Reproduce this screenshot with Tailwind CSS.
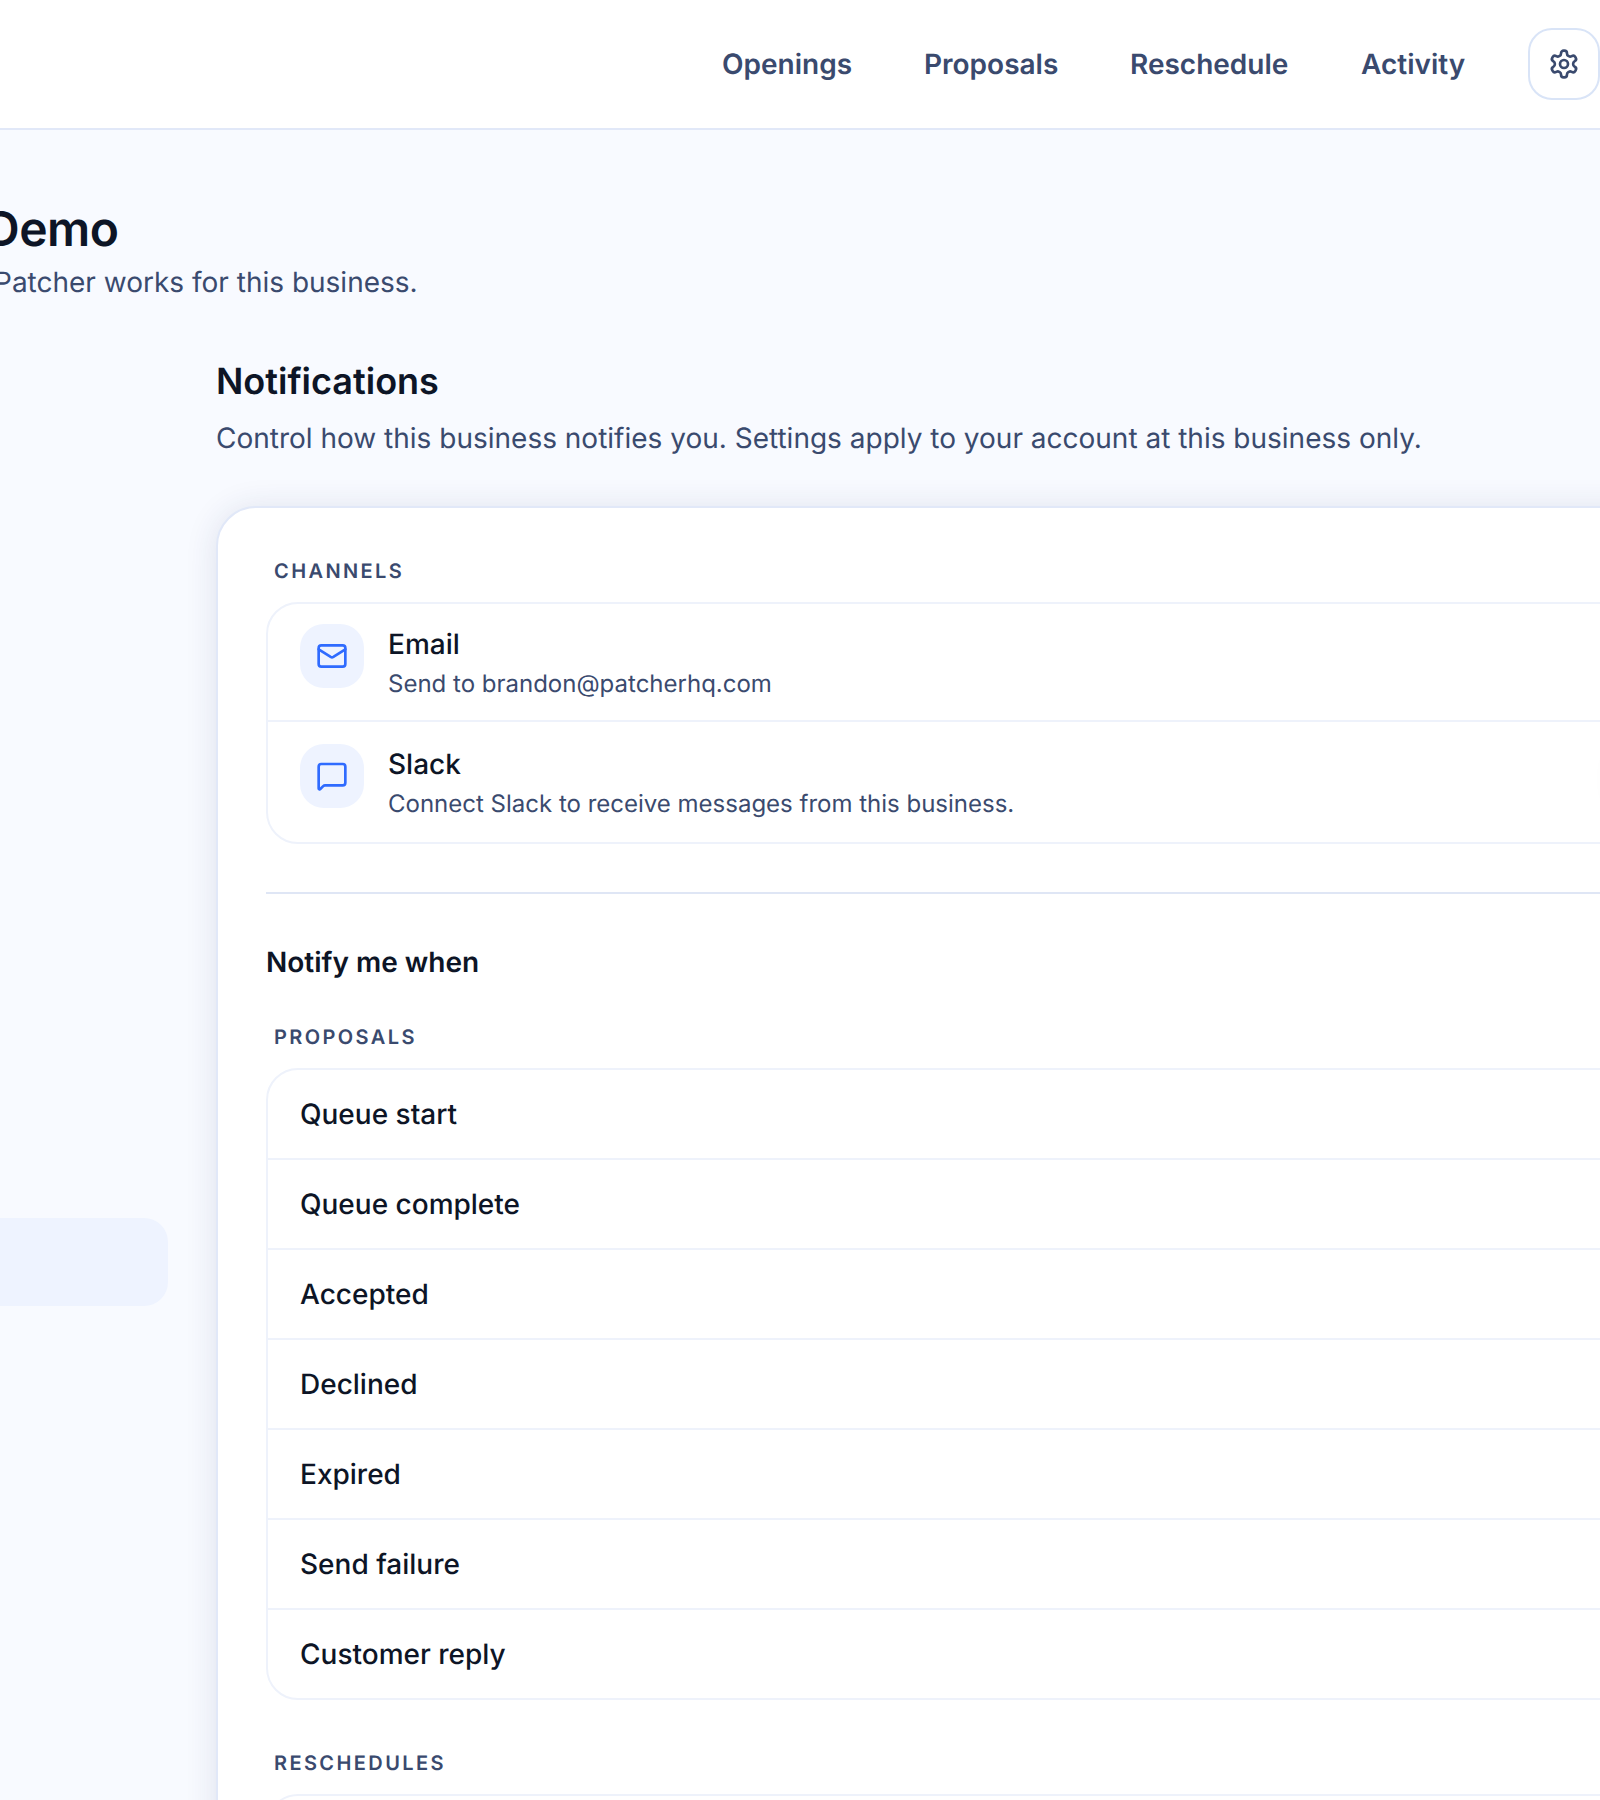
<!DOCTYPE html>
<html lang="en">
<head>
<meta charset="utf-8">
<title>Notifications</title>
<script src="https://cdn.jsdelivr.net/npm/@tailwindcss/browser@4"></script>
</head>
<body class="m-0">
<div class="w-[1600px] h-[1800px] overflow-hidden bg-[#f8faff] font-['Inter',sans-serif] text-[#0d1526] [text-rendering:geometricPrecision]">
  <header class="h-[130px] bg-white border-b-2 border-[#e1e8f8] flex items-center">
    <nav class="ml-[722px] flex items-center text-[28px] leading-[40px] font-semibold text-[#3a4a6e] whitespace-nowrap">
      <a class="w-[202px]">Openings</a>
      <a class="w-[206px]">Proposals</a>
      <a class="w-[231px]">Reschedule</a>
      <a class="w-[167px]">Activity</a>
      <button class="w-[72px] h-[72px] rounded-[24px] border-2 border-[#d9e4f7] bg-white flex items-center justify-center text-[#3a4a6e]">
        <svg width="32" height="32" viewBox="0 0 24 24" fill="none" stroke="currentColor" stroke-width="2" stroke-linecap="round" stroke-linejoin="round"><path d="M12.22 2h-.44a2 2 0 0 0-2 2v.18a2 2 0 0 1-1 1.73l-.43.25a2 2 0 0 1-2 0l-.15-.08a2 2 0 0 0-2.73.73l-.22.38a2 2 0 0 0 .73 2.73l.15.1a2 2 0 0 1 1 1.72v.51a2 2 0 0 1-1 1.74l-.15.09a2 2 0 0 0-.73 2.73l.22.38a2 2 0 0 0 2.73.73l.15-.08a2 2 0 0 1 2 0l.43.25a2 2 0 0 1 1 1.73V20a2 2 0 0 0 2 2h.44a2 2 0 0 0 2-2v-.18a2 2 0 0 1 1-1.73l.43-.25a2 2 0 0 1 2 0l.15.08a2 2 0 0 0 2.73-.73l.22-.39a2 2 0 0 0-.73-2.73l-.15-.08a2 2 0 0 1-1-1.74v-.5a2 2 0 0 1 1-1.74l.15-.09a2 2 0 0 0 .73-2.73l-.22-.38a2 2 0 0 0-2.73-.73l-.15.08a2 2 0 0 1-2 0l-.43-.25a2 2 0 0 1-1-1.73V4a2 2 0 0 0-2-2z"/><circle cx="12" cy="12" r="3"/></svg>
      </button>
    </nav>
  </header>

  <main>
    <div class="pt-[71px] whitespace-nowrap">
      <h1 class="-ml-[15px] text-[48px] leading-[56px] font-semibold tracking-[-0.5px]">Demo</h1>
      <p class="-ml-[6px] mt-[7px] text-[28px] leading-[36px] text-[#3a4a6e]">Patcher works for this business.</p>
    </div>

    <div class="flex mt-[59px]">
      <aside class="w-[168px] mr-[48px] shrink-0">
        <div class="mt-[859px] h-[88px] rounded-r-[24px] bg-[#eef3ff]"></div>
      </aside>

      <section class="w-[1500px] shrink-0">
        <h2 class="text-[36px] leading-[44px] font-semibold">Notifications</h2>
        <p class="mt-[15px] text-[28px] leading-[40px] text-[#3a4a6e] whitespace-nowrap">Control how this business notifies you. Settings apply to your account at this business only.</p>

        <div class="mt-[48px] rounded-[40px] border-2 border-[#e1e8f8] bg-white pl-[48px] pt-[49px] pb-[40px] shadow-[0_2px_32px_rgba(30,50,100,0.12)]">
          <h3 class="pl-[8px] text-[20px] leading-[28px] font-semibold tracking-[2.4px] text-[#3a4a6e]">CHANNELS</h3>
          <div class="mt-[17px] rounded-[32px] border-2 border-[#eef2fb] divide-y-2 divide-[#eef2fb]">
            <div class="flex gap-[24px] pl-[32px] pt-[20px] pb-[18px]">
              <span class="w-[64px] h-[64px] rounded-[24px] bg-[#eef3ff] flex items-center justify-center text-[#2f6bff]">
                <svg width="32" height="32" viewBox="0 0 24 24" fill="none" stroke="currentColor" stroke-width="2" stroke-linecap="round" stroke-linejoin="round"><rect x="2" y="4" width="20" height="16" rx="2"/><path d="m22 7-8.991 5.727a2 2 0 0 1-2.009 0L2 7"/></svg>
              </span>
              <div>
                <p class="text-[28px] leading-[40px] font-medium">Email</p>
                <p class="mt-[2px] text-[24px] leading-[36px] text-[#3a4a6e]">Send to brandon@patcherhq.com</p>
              </div>
            </div>
            <div class="relative flex gap-[24px] pl-[32px] pt-[22px] pb-[20px]">
              <span class="w-[64px] h-[64px] rounded-[24px] bg-[#eef3ff] flex items-center justify-center text-[#2f6bff]">
                <svg width="32" height="32" viewBox="0 0 24 24" fill="none" stroke="currentColor" stroke-width="2" stroke-linecap="round" stroke-linejoin="round"><path d="M22 17a2 2 0 0 1-2 2H6.828a2 2 0 0 0-1.414.586l-2.202 2.202A.71.71 0 0 1 2 21.286V5a2 2 0 0 1 2-2h16a2 2 0 0 1 2 2z"/></svg>
              </span>
              <div>
                <p class="text-[28px] leading-[40px] font-medium">Slack</p>
                <p class="mt-[2px] text-[24px] leading-[36px] text-[#3a4a6e]">Connect Slack to receive messages from this business.</p>
              </div>
              <span class="absolute left-[1340px] top-[24px] w-[60px] h-[66px] rounded-[24px] bg-white shadow-[0_0_16px_rgba(15,23,42,0.05)]"></span>
            </div>
          </div>

          <hr class="mt-[48px] border-0 h-[2px] bg-[#dfe6f5]">

          <h3 class="mt-[48px] text-[28px] leading-[40px] font-semibold">Notify me when</h3>

          <h4 class="mt-[41px] pl-[8px] text-[20px] leading-[28px] font-semibold tracking-[2.4px] text-[#3a4a6e]">PROPOSALS</h4>
          <ul class="mt-[17px] rounded-[32px] border-2 border-[#eef2fb] divide-y-2 divide-[#eef2fb] text-[28px] font-medium">
            <li class="h-[90px] pl-[32px] flex items-center">Queue start</li>
            <li class="h-[90px] pl-[32px] flex items-center">Queue complete</li>
            <li class="h-[90px] pl-[32px] flex items-center">Accepted</li>
            <li class="h-[90px] pl-[32px] flex items-center">Declined</li>
            <li class="h-[90px] pl-[32px] flex items-center">Expired</li>
            <li class="h-[90px] pl-[32px] flex items-center">Send failure</li>
            <li class="h-[88px] pl-[32px] flex items-center">Customer reply</li>
          </ul>

          <h4 class="mt-[49px] pl-[8px] text-[20px] leading-[28px] font-semibold tracking-[2.4px] text-[#3a4a6e]">RESCHEDULES</h4>
          <div class="mt-[17px] h-[120px] rounded-[32px] border-2 border-[#eef2fb]"></div>
        </div>
      </section>
    </div>
  </main>
</div>
</body>
</html>
